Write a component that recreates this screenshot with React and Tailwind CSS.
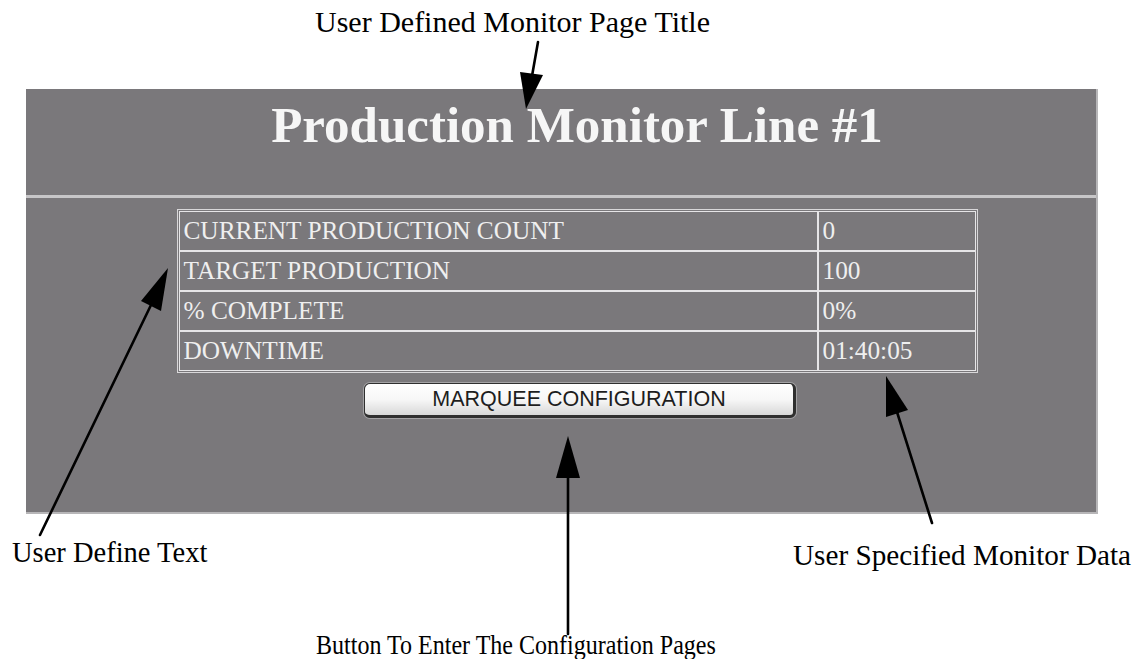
const rows = [
  { label: 'CURRENT PRODUCTION COUNT', value: '0' },
  { label: 'TARGET PRODUCTION', value: '100' },
  { label: '% COMPLETE', value: '0%' },
  { label: 'DOWNTIME', value: '01:40:05' },
];

// callout arrows drawn over the screenshot
function Arrows() {
  return (
    <svg
      className="absolute inset-0 pointer-events-none"
      width="1138"
      height="659"
      viewBox="0 0 1138 659"
    >
      <g stroke="#000" strokeWidth="2.6" strokeLinecap="round">
        <line x1="538" y1="42" x2="532" y2="76" />
        <line x1="40" y1="535" x2="151" y2="305" />
        <line x1="568" y1="634" x2="568" y2="476" />
        <line x1="932" y1="523" x2="897" y2="412" />
      </g>
      <g fill="#000">
        <polygon points="520,72 543,75 526,109" />
        <polygon points="168,268 161,311 141,301" />
        <polygon points="556,478 580,478 568,436" />
        <polygon points="886,376 908,410 886,417" />
      </g>
    </svg>
  );
}

function MonitorTable() {
  return (
    <div className="w-[801px] border border-[#d9d8da] p-[1px]">
      {rows.map((row) => (
        <div key={row.label} className="grid grid-cols-[639px_158px]">
          <div className="h-[40px] border border-[#e6e5e7] pl-[4px] text-[25.3px] leading-[36px] text-[#efefef]">
            {row.label}
          </div>
          <div className="h-[40px] border border-[#e6e5e7] pl-[4px] text-[25.3px] leading-[36px] text-[#efefef]">
            {row.value}
          </div>
        </div>
      ))}
    </div>
  );
}

export default function App() {
  return (
    <div
      className="relative w-[1138px] h-[659px] overflow-hidden bg-white text-black"
      style={{ fontFamily: '"Liberation Serif", "Times New Roman", serif' }}
    >
      <div className="pl-[315px] pt-[5px] text-[30px] leading-[33px]">User Defined Monitor Page Title</div>

      <div className="ml-[26px] mt-[51px] w-[1072px] h-[425px] flex flex-col bg-[#7a787b] border-r-2 border-b-2 border-[#b7b6b8]">
        <div className="h-[106px] pl-[32px] pt-[7px] text-center text-[51px] leading-[58px] font-bold text-[#f6f6f6]">
          Production Monitor Line #1
        </div>
        <div className="h-[3px] bg-[#c7c6c8]" />
        <div className="pl-[32px] pt-[11px] flex flex-col items-center">
          <MonitorTable />
          <button
            type="button"
            className="mt-[10px] ml-[6px] w-[432px] h-[35px] flex items-center justify-center rounded-[6px] border border-[#2f2f2f] border-r-[3px] border-b-[3px] bg-linear-to-b from-white via-[#f7f7f7] to-[#d8d8d8] shadow-[0_0_0_1px_#a3a2a4] text-[21.5px] text-[#1e1e1e]"
            style={{ fontFamily: '"Liberation Sans", Arial, sans-serif' }}
          >
            MARQUEE CONFIGURATION
          </button>
        </div>
      </div>

      <div className="mt-[23px] grid grid-cols-[793px_1fr] leading-[32px]">
        <div className="pl-[12px] text-[28.5px]">User Define Text</div>
        <div className="pt-[2px] text-[29.2px]">User Specified Monitor Data</div>
      </div>

      <div className="mt-[58px] pl-[316px] text-[27px] leading-[32px]">
        <span className="inline-block origin-left scale-x-[0.89] whitespace-nowrap">
          Button To Enter The Configuration Pages
        </span>
      </div>

      <Arrows />
    </div>
  );
}
